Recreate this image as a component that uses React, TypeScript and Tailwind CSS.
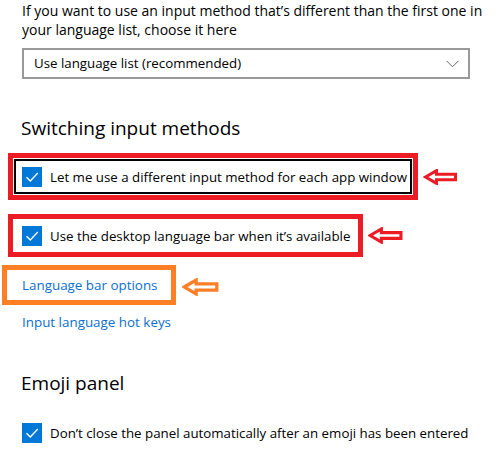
import React from "react";

const Check = () => (
  <div className="w-[20px] h-[20px] bg-[#0078d7] flex items-center justify-center shrink-0">
    <svg width="20" height="20" viewBox="0 0 20 20">
      <path d="M4.5 10.2 L8.3 14 L15.8 6" fill="none" stroke="#fff" strokeWidth="1.4" />
    </svg>
  </div>
);

const Arrow = ({ color, w, h }: { color: string; w: number; h: number }) => (
  <svg width={w} height={h} viewBox="0 0 34 16">
    <polygon
      points="2,8 13,1.6 13,5.2 32,5.2 32,10.8 13,10.8 13,14.4"
      fill="#fff"
      stroke={color}
      strokeWidth="3"
      strokeLinejoin="miter"
    />
  </svg>
);

export default function App() {
  return (
    <div
      className="w-[502px] h-[463px] bg-white overflow-hidden text-black"
      style={{ fontFamily: '"Open Sans", "Noto Sans", sans-serif' }}
    >
      <p className="pl-[22px] pt-[1px] text-[14px] leading-[19px] text-black whitespace-nowrap">
        If you want to use an input method that’s different than the first one in
        <br />
        your language list, choose it here
      </p>

      <div className="ml-[22px] mt-[9px] w-[448px] h-[31px] border-2 border-[#999999] flex items-center justify-between pl-[10px] pr-[9px] text-[13.3px]">
        <span>Use language list (recommended)</span>
        <svg width="13" height="8" viewBox="0 0 13 8">
          <path d="M0.5 0.8 L6.5 6.8 L12.5 0.8" fill="none" stroke="#666" strokeWidth="1" />
        </svg>
      </div>

      <h2 className="pl-[21px] mt-[36px] text-[19px] leading-[26px] font-normal whitespace-nowrap">Switching input methods</h2>

      <div className="flex items-center mt-[12px]">
        <div className="ml-[8px] w-[410px] h-[47px] border-[5px] border-[#ed1c24] p-[1px]">
          <div className="w-full h-full border-2 border-black flex items-center gap-[8px] pl-[6px]">
            <Check />
            <span className="text-[13.3px] leading-[20px] whitespace-nowrap">Let me use a different input method for each app window</span>
          </div>
        </div>
        <div className="ml-[5px] mt-[1px]">
          <Arrow color="#ed1c24" w={35} h={16} />
        </div>
      </div>

      <div className="flex items-center mt-[14px]">
        <div className="ml-[8px] w-[355px] h-[43px] border-[5px] border-[#ed1c24] flex items-center gap-[8px] pl-[9px]">
          <Check />
          <span className="text-[13.3px] leading-[20px] whitespace-nowrap">Use the desktop language bar when it’s available</span>
        </div>
        <div className="ml-[5px] mt-[0px]">
          <Arrow color="#ed1c24" w={35} h={17} />
        </div>
      </div>

      <div className="flex items-center mt-[8px]">
        <div className="ml-[2px] w-[174px] h-[40px] border-[5px] border-[#ff7f27] flex items-center pl-[15px]">
          <span className="text-[13.4px] leading-[20px] text-[#0a6fd0] whitespace-nowrap">Language bar options</span>
        </div>
        <div className="ml-[6px] mt-[3px]">
          <Arrow color="#ff7f27" w={37} h={18} />
        </div>
      </div>

      <div className="pl-[22px] mt-[7px] text-[13.4px] leading-[20px] text-[#0a6fd0] whitespace-nowrap">Input language hot keys</div>

      <h2 className="pl-[21px] mt-[38px] text-[19px] leading-[26px] font-normal">Emoji panel</h2>

      <div className="flex items-center gap-[8px] pl-[22px] mt-[27px]">
        <Check />
        <span className="text-[13.3px] leading-[20px] whitespace-nowrap">Don’t close the panel automatically after an emoji has been entered</span>
      </div>
    </div>
  );
}
